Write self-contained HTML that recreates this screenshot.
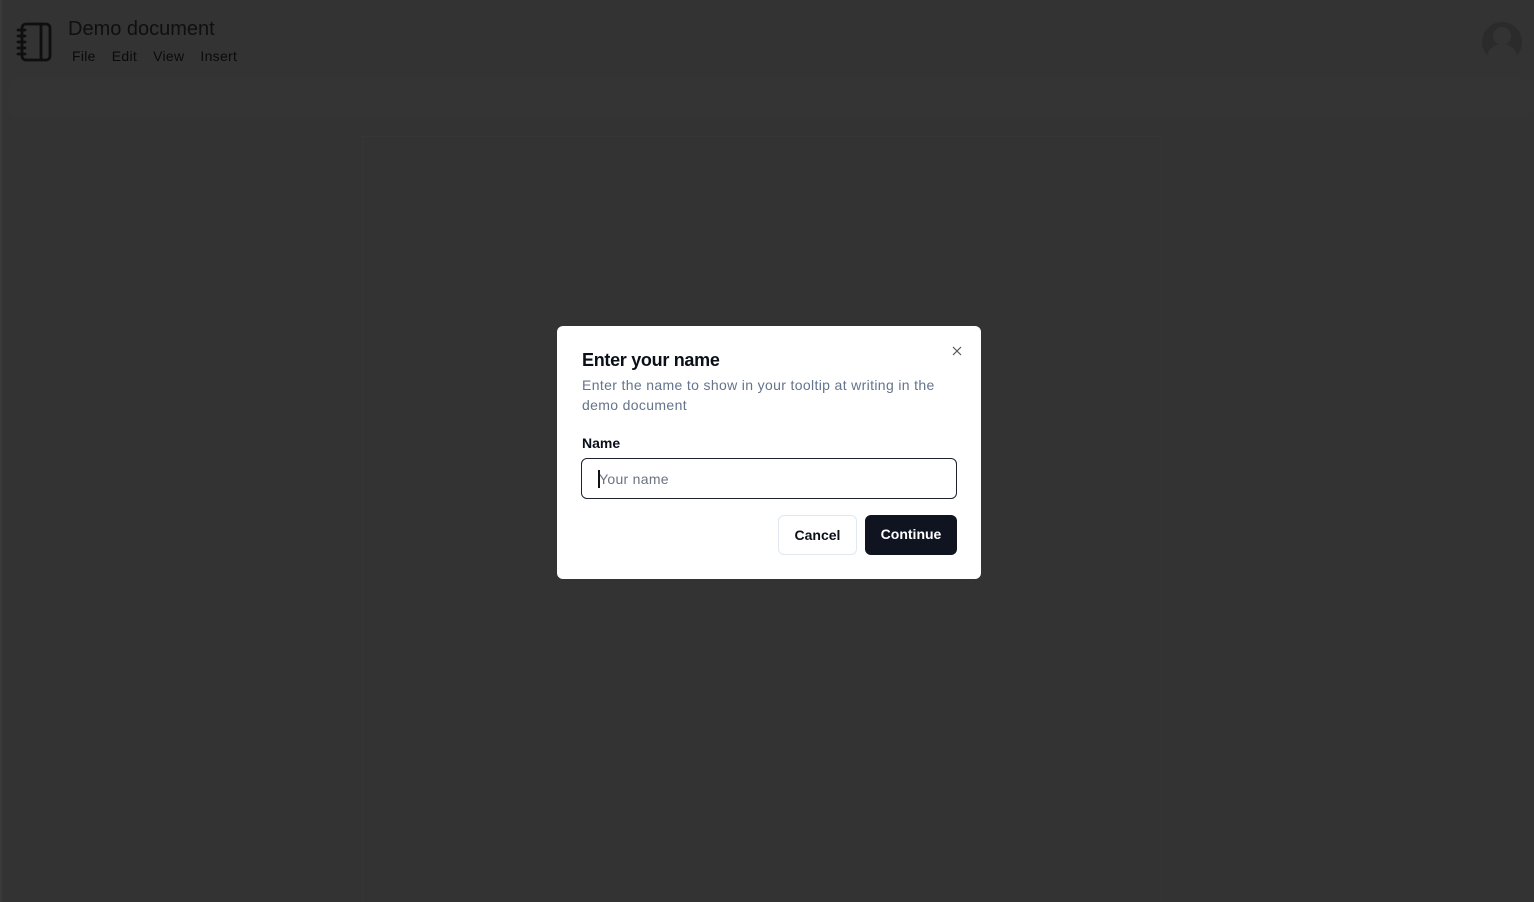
<!DOCTYPE html>
<html style="overflow:hidden;height:902px"><head><style>
body{margin:0;width:1534px;height:902px;background:#333;font-family:"Liberation Sans",sans-serif;position:relative;overflow:hidden}
.left{position:absolute;left:0;top:0;width:2px;height:902px;background:#3a3a3a}
.tb{position:absolute;left:8px;top:78px;width:1526px;height:40px;background:#343434;border-radius:12px}
.page{position:absolute;left:362px;top:136px;width:798px;height:770px;border:1px solid #363636;border-bottom:none;background:#333}
.title{position:absolute;left:68px;top:18px;font-size:20px;color:#0f0f0f}
.menu{position:absolute;left:72px;top:48px;font-size:14px;color:#0a0a0a;letter-spacing:.3px}
.menu span{margin-right:16px}
.av{position:absolute;left:1482px;top:22px;width:40px;height:40px;border-radius:50%;background:#2b2b2b;overflow:hidden}
.dlg{position:absolute;left:557px;top:326px;width:424px;height:253px;background:#fff;border-radius:6px;box-sizing:border-box}
h2{position:absolute;left:25px;top:24px;margin:0;font-size:18px;font-weight:bold;color:#0b0f19;letter-spacing:-.3px}
.d{position:absolute;left:25px;top:49px;width:380px;font-size:14px;line-height:20px;color:#64748b;letter-spacing:.35px}
.lab{position:absolute;left:25px;top:109px;font-size:14px;font-weight:bold;color:#0b0f19}
.inp{position:absolute;left:24px;top:132px;width:376px;height:41px;box-sizing:border-box;border:1.5px solid #1c2230;border-radius:6px;font-size:14px;color:#6b7280;padding:12px 17px;letter-spacing:.3px}
.inp i{position:absolute;left:16px;top:11px;width:1.5px;height:18px;background:#111}
.btn{position:absolute;top:189px;height:40px;box-sizing:border-box;border-radius:6px;font-size:14px;font-weight:bold;text-align:center;line-height:39px}
.c{left:221px;width:79px;border:1px solid #e2e8f0;color:#0b0f19}
.k{left:308px;width:92px;background:#0f1420;color:#fff}
.x{position:absolute;left:394px;top:19px}
</style></head><body>
<div class="left"></div><div class="tb"></div><div class="page"></div>
<svg style="position:absolute;left:16px;top:22px" width="36" height="40" viewBox="0 0 36 40" fill="none" stroke="#0f0f0f" stroke-width="2.8" stroke-linecap="round"><rect x="6" y="2" width="28" height="36" rx="4"/><line x1="25" y1="3" x2="25" y2="37"/><path d="M2 8h7M2 14h7M2 20h7M2 26h7M2 32h7"/></svg>
<div class="title">Demo document</div>
<div class="menu"><span>File</span><span>Edit</span><span>View</span><span>Insert</span></div>
<div class="av"><div style="position:absolute;left:11px;top:5px;width:18px;height:18px;border-radius:50%;background:#333"></div><div style="position:absolute;left:5px;top:22px;width:30px;height:26px;border-radius:50%;background:#333"></div></div>
<div class="dlg">
<h2>Enter your name</h2>
<svg class="x" width="12" height="12" viewBox="0 0 12 12" stroke="#555" stroke-width="1.2"><path d="M2 2l8 8M10 2l-8 8"/></svg>
<div class="d">Enter the name to show in your tooltip at writing in the demo document</div>
<div class="lab">Name</div>
<div class="inp"><i></i>Your name</div>
<div class="btn c">Cancel</div><div class="btn k">Continue</div>
</div>
</body></html>
